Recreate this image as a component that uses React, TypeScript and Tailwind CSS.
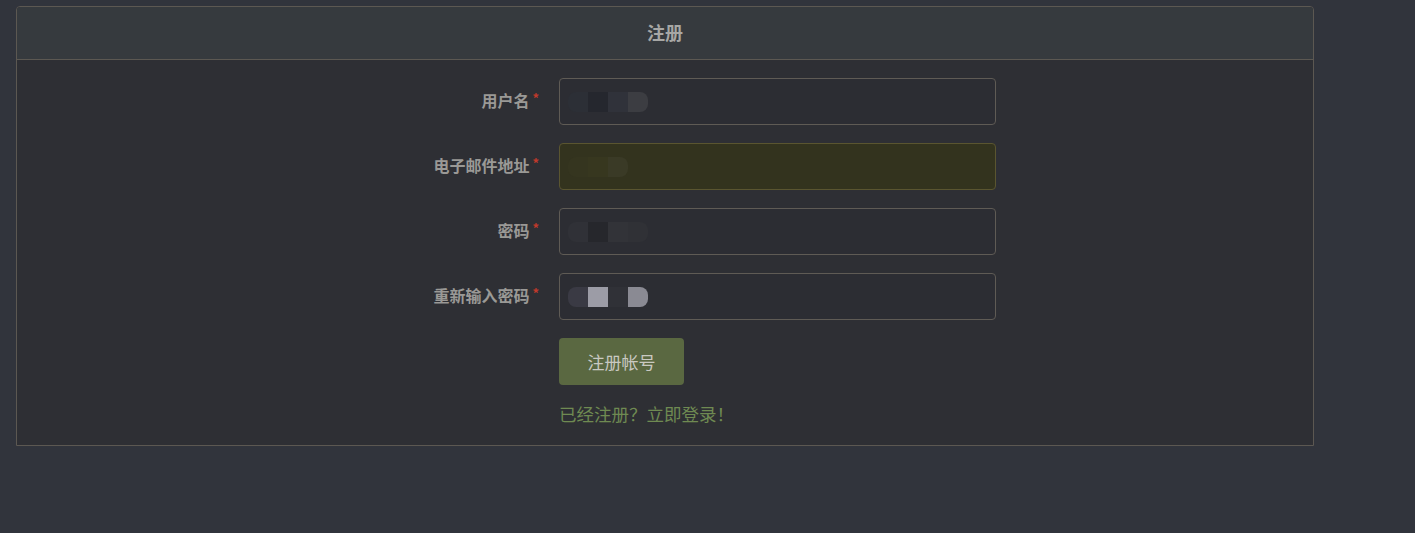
import React from "react";

const font = { fontFamily: '"Noto Sans CJK SC", "Noto Sans", sans-serif' };

interface Field {
  label: string;
  highlight?: boolean;
  blocks: { w: number; c: string }[];
}

const fields: Field[] = [
  {
    label: "用户名",
    blocks: [
      { w: 20, c: "#2c2f36" },
      { w: 20, c: "#25272e" },
      { w: 20, c: "#30323a" },
      { w: 20, c: "#3c3d42" },
    ],
  },
  {
    label: "电子邮件地址",
    highlight: true,
    blocks: [
      { w: 20, c: "#35351f" },
      { w: 20, c: "#37371f" },
      { w: 20, c: "#3a3a26" },
    ],
  },
  {
    label: "密码",
    blocks: [
      { w: 20, c: "#303137" },
      { w: 20, c: "#26272c" },
      { w: 20, c: "#323338" },
      { w: 20, c: "#303136" },
    ],
  },
  {
    label: "重新输入密码",
    blocks: [
      { w: 20, c: "#3a3a44" },
      { w: 20, c: "#9c9ca6" },
      { w: 20, c: "#303137" },
      { w: 20, c: "#8a8a93" },
    ],
  },
];

function FormRow({ field }: { field: Field }) {
  return (
    <div className="flex items-start">
      <label className="w-[524px] shrink-0 pt-[10px] text-right text-[16px] font-bold leading-[24px] text-[#9a9996]">
        {field.label}
        <sup className="top-[-4px] ml-[3px] mr-[2px] text-[13px] font-bold text-[#c0392b]">*</sup>
      </label>
      <div
        className={`ml-[18px] flex h-[47px] w-[437px] items-center rounded-[4px] border px-[8px] ${
          field.highlight
            ? "border-[#5a5530] bg-[#33331e]"
            : "border-[#5f5b55] bg-[#2c2d33]"
        }`}
      >
        <div className="flex h-[20px] overflow-hidden rounded-[8px] blur-[0.5px]">
          {field.blocks.map((b, i) => (
            <div key={i} style={{ width: b.w, background: b.c }} />
          ))}
        </div>
      </div>
    </div>
  );
}

export default function App() {
  return (
    <div className="min-h-[533px] w-full bg-[#31343c] pt-[6px] pl-[16px]" style={font}>
      <div className="w-[1298px] overflow-hidden rounded-t-[4px] border border-[#5c5852] bg-[#2e2f34]">
        {/* Header */}
        <div className="flex h-[53px] items-center justify-center border-b border-[#5c5852] bg-[#363a3e] pb-[2px]">
          <span className="text-[18px] font-bold text-[#a7a7a5]">注册</span>
        </div>

        {/* Body */}
        <div className="flex flex-col gap-[18px] pt-[18px] pb-[19px]">
          {fields.map((f) => (
            <FormRow key={f.label} field={f} />
          ))}

          <div className="flex flex-col pl-[542px]">
            <button className="h-[47px] w-[125px] rounded-[4px] bg-[#5a6841] text-[17px] text-[#c9c9c1]">
              注册帐号
            </button>
            <a className="mt-[17px] text-[17.5px] leading-[24px] text-[#6f8a52]">
              已经注册？立即登录！
            </a>
          </div>
        </div>
      </div>
    </div>
  );
}
